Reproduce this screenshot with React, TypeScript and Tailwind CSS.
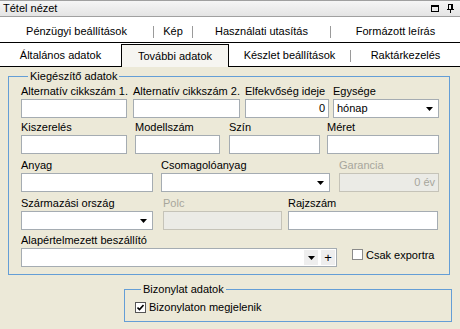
const Arrow = () => (
  <span className="flex h-full w-[17px] shrink-0 items-center justify-center">
    <svg width="7" height="4" viewBox="0 0 7 4">
      <path d="M0 0H7L3.5 4Z" fill="#000" />
    </svg>
  </span>
);

type FieldProps = {
  label: string;
  width: string;
  value?: string;
  disabled?: boolean;
  select?: boolean;
  right?: boolean;
};

const Field = ({ label, width, value, disabled, select, right }: FieldProps) => {
  return (
    <div className={`${width} shrink-0`}>
      <div className={`h-[15px] leading-[14px] whitespace-nowrap ${disabled ? 'text-[#a7a69c]' : ''}`}>
        {label}
      </div>
      <div
        className={`flex h-[19px] items-center border ${
          disabled ? 'border-[#c5c3b8] bg-[#ebebe6] text-[#a7a69c]' : 'border-[#a5acb2] bg-white'
        }`}
      >
        <div className={`flex-1 px-[3px] ${right ? 'text-right' : ''}`}>{value}</div>
        {select && <Arrow />}
      </div>
    </div>
  );
};

const App = () => {
  return (
    <div className="h-[329px] w-[460px] overflow-hidden bg-[#ece9d8] font-['Liberation_Sans',Arial,sans-serif] text-[11px] text-black">
      {/* title bar */}
      <div className="flex h-[17px] items-center justify-between border-y border-[#a0a0a0] bg-linear-to-b from-[#f6f6f6] to-[#e4e4e4] pl-[3px] pr-[6px]">
        <span>Tétel nézet</span>
        <div className="flex items-center gap-[8px]">
          <svg width="8" height="7" viewBox="0 0 8 7">
            <rect x="0.5" y="0.5" width="7" height="6" fill="none" stroke="#000" />
            <line x1="0" y1="1.5" x2="8" y2="1.5" stroke="#000" />
          </svg>
          <svg width="7" height="9" viewBox="0 0 7 9">
            <rect x="1.5" y="0.5" width="4" height="5" fill="none" stroke="#000" />
            <line x1="4.5" y1="0" x2="4.5" y2="6" stroke="#000" />
            <line x1="0" y1="5.5" x2="7" y2="5.5" stroke="#000" />
            <line x1="3.5" y1="6" x2="3.5" y2="9" stroke="#000" />
          </svg>
        </div>
      </div>

      {/* tabs row 1 */}
      <div className="flex h-[26px] items-center border-b border-black bg-white pt-[4px]">
        <div className="w-[153px] text-center">Pénzügyi beállítások</div>
        <div className="h-[12px] w-px bg-[#9a9a9a]" />
        <div className="w-[38px] text-center">Kép</div>
        <div className="h-[12px] w-px bg-[#9a9a9a]" />
        <div className="w-[137px] text-center">Használati utasítás</div>
        <div className="h-[12px] w-px bg-[#9a9a9a]" />
        <div className="flex-1 text-center">Formázott leírás</div>
      </div>

      {/* tabs row 2 */}
      <div className="flex h-[24px] items-end border-b border-black bg-white">
        <div className="flex h-full w-[121px] items-center justify-center pt-[2px]">Általános adatok</div>
        <div className="relative -mb-px flex h-[23px] w-[108px] items-center justify-center border border-b-0 border-black bg-[#f6f5f1] pt-[1px]">
          További adatok
        </div>
        <div className="flex h-full w-[121px] items-center justify-center pt-[2px]">Készlet beállítások</div>
        <div className="mb-[4px] h-[12px] w-px self-end bg-[#9a9a9a]" />
        <div className="flex h-full flex-1 items-center justify-center pt-[2px]">Raktárkezelés</div>
      </div>

      {/* Kiegészítő adatok */}
      <fieldset className="mt-[2px] ml-[8px] w-[442px] border border-[#649ed6] pb-[7px] pl-[12px]">
        <legend className="ml-[7px] px-[2px] leading-[14px]">Kiegészítő adatok</legend>
        <div className="mt-[1px] flex">
          <Field label="Alternatív cikkszám 1." width="w-[106px]" />
          <div className="ml-[6px]">
            <Field label="Alternatív cikkszám 2." width="w-[107px]" />
          </div>
          <div className="ml-[5px]">
            <Field label="Elfekvőség ideje" width="w-[84px]" value="0" right />
          </div>
          <div className="ml-[4px]">
            <Field label="Egysége" width="w-[106px]" value="hónap" select />
          </div>
        </div>
        <div className="mt-[2px] flex">
          <Field label="Kiszerelés" width="w-[106px]" />
          <div className="ml-[8px]">
            <Field label="Modellszám" width="w-[85px]" />
          </div>
          <div className="ml-[9px]">
            <Field label="Szín" width="w-[91px]" />
          </div>
          <div className="ml-[7px]">
            <Field label="Méret" width="w-[112px]" />
          </div>
        </div>
        <div className="mt-[4px] flex">
          <Field label="Anyag" width="w-[132px]" />
          <div className="ml-[8px]">
            <Field label="Csomagolóanyag" width="w-[169px]" select />
          </div>
          <div className="ml-[9px]">
            <Field label="Garancia" width="w-[100px]" value="0 év" right disabled />
          </div>
        </div>
        <div className="mt-[4px] flex">
          <Field label="Származási ország" width="w-[132px]" select />
          <div className="ml-[10px]">
            <Field label="Polc" width="w-[119px]" disabled />
          </div>
          <div className="ml-[6px]">
            <Field label="Rajzszám" width="w-[150px]" />
          </div>
        </div>
        <div className="mt-[3px] flex items-end">
          <div className="w-[316px] shrink-0">
            <div className="h-[15px] leading-[14px]">Alapértelmezett beszállító</div>
            <div className="flex h-[19px] items-center border border-[#a5acb2] bg-white pr-px">
              <div className="flex-1" />
              <span className="flex h-[15px] w-[14px] items-center justify-center bg-[#eeeeee]">
                <svg width="7" height="4" viewBox="0 0 7 4">
                  <path d="M0 0H7L3.5 4Z" fill="#000" />
                </svg>
              </span>
              <span className="ml-[3px] flex h-[15px] w-[14px] items-center justify-center bg-[#eeeeee] text-[13px] leading-none">
                +
              </span>
            </div>
          </div>
          <div className="mb-[4px] ml-[15px] flex items-center">
            <span className="h-[11px] w-[11px] border border-[#8a8a8a] bg-white" />
            <span className="ml-[3px]">Csak exportra</span>
          </div>
        </div>
      </fieldset>

      {/* Bizonylat adatok */}
      <fieldset className="mt-[7px] ml-[124px] w-[328px] border border-[#649ed6] pb-[7px] pl-[10px]">
        <legend className="ml-[6px] px-[2px] leading-[14px]">Bizonylat adatok</legend>
        <div className="mt-[4px] flex h-[14px] items-center">
          <span className="flex h-[11px] w-[11px] items-center justify-center border border-[#555] bg-white">
            <svg width="7" height="7" viewBox="0 0 7 7">
              <path d="M0.5 3.5L2.5 5.5L6.5 1" fill="none" stroke="#000" strokeWidth="1.6" />
            </svg>
          </span>
          <span className="ml-[3px]">Bizonylaton megjelenik</span>
        </div>
      </fieldset>
    </div>
  );
};

export default App;
